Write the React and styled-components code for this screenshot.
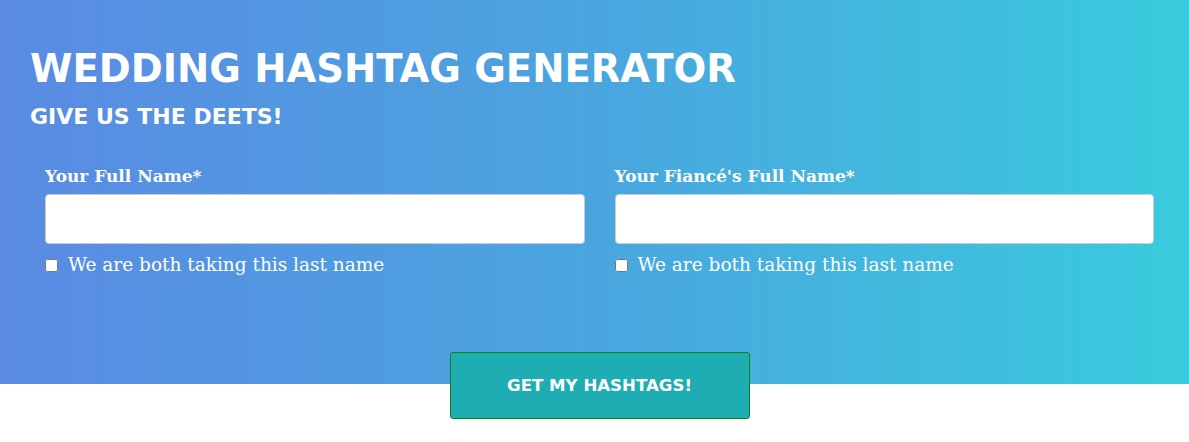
import styled, { createGlobalStyle } from 'styled-components';

const GlobalStyle = createGlobalStyle`
	body {
		margin: 0;
		background: #fff;
		font-family: 'DejaVu Sans', sans-serif;
	}
	* {
		box-sizing: border-box;
	}
`;

const Hero = styled.section`
	background: linear-gradient(90deg, #5a8ae3 0%, #4aa5df 50%, #39cbdd 100%);
	height: 384px;
	padding: 44px 20px 0 30px;
`;

const Title = styled.h1`
	margin: 0;
	font-family: 'DejaVu Sans', sans-serif;
	font-weight: 700;
	font-size: 38.5px;
	line-height: 50px;
	color: #fff;
`;

const Subtitle = styled.h2`
	margin: 9px 0 0;
	font-family: 'DejaVu Sans', sans-serif;
	font-weight: 700;
	font-size: 22px;
	line-height: 28px;
	color: #fff;
`;

const Fields = styled.div`
	display: grid;
	grid-template-columns: 1fr 1fr;
	margin-top: 33px;
`;

const Field = styled.div`
	padding: 0 15px;
	display: flex;
	flex-direction: column;
`;

const Label = styled.label`
	font-family: 'DejaVu Serif', serif;
	font-weight: 700;
	font-size: 17px;
	line-height: 24px;
	color: #fff;
	margin-bottom: 6px;
`;

const Input = styled.input`
	height: 50px;
	width: 100%;
	border: 1px solid #ccc;
	border-radius: 4px;
	background: #fff;
	font-size: 16px;
	padding: 0 12px;
`;

const CheckRow = styled.label`
	display: flex;
	align-items: center;
	gap: 10px;
	margin-top: 9px;
	font-family: 'DejaVu Serif', serif;
	font-size: 18.5px;
	line-height: 24px;
	color: #fff;

	input {
		margin: 0;
		width: 13px;
		height: 13px;
	}
`;

const ButtonRow = styled.div`
	display: flex;
	justify-content: center;
	margin: -32px 20px 0 30px;
`;

const Button = styled.button`
	width: 300px;
	height: 67px;
	background: #1eadb3;
	border: 1px solid #0a8a0a;
	border-radius: 3px;
	color: #fff;
	font-family: 'DejaVu Sans', sans-serif;
	font-weight: 700;
	font-size: 16.6px;
	cursor: pointer;
`;

function NameField({ label }) {
	return (
		<Field>
			<Label>{label}</Label>
			<Input type='text' />
			<CheckRow>
				<input type='checkbox' />
				We are both taking this last name
			</CheckRow>
		</Field>
	);
}

export default function App() {
	return (
		<>
			<GlobalStyle />
			<Hero>
				<Title>WEDDING HASHTAG GENERATOR</Title>
				<Subtitle>GIVE US THE DEETS!</Subtitle>
				<Fields>
					<NameField label='Your Full Name*' />
					<NameField label="Your Fiancé's Full Name*" />
				</Fields>
			</Hero>
			<ButtonRow>
				<Button>GET MY HASHTAGS!</Button>
			</ButtonRow>
		</>
	);
}
